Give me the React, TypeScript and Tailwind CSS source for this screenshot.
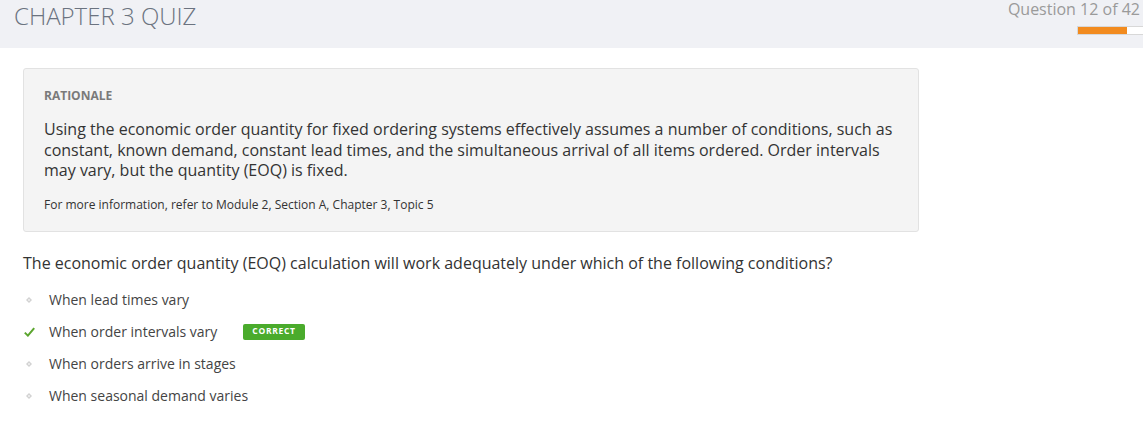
import React from "react";

const options = [
  { text: "When lead times vary", correct: false },
  { text: "When order intervals vary", correct: true },
  { text: "When orders arrive in stages", correct: false },
  { text: "When seasonal demand varies", correct: false },
];

export default function App() {
  return (
    <div className="w-[1143px] h-[427px] bg-white overflow-hidden" style={{ fontFamily: '"Open Sans", sans-serif' }}>
      <header className="h-[48px] bg-[#f0f1f5] flex justify-between">
        <h1 className="pl-[14px] pt-[1px] text-[24px] leading-[30px] font-light text-[#6b7380]">CHAPTER 3 QUIZ</h1>
        <div className="flex flex-col items-end">
          <div className="text-[16px] leading-[18px] text-[#9a9a9a] pr-[3px] whitespace-nowrap">Question 12 of 42</div>
          <div className="mt-[8px] w-[66px] h-[9px] bg-white border border-[#d8d8d8] border-r-0">
            <div className="h-full bg-[#f28b1f]" style={{ width: "49px" }} />
          </div>
        </div>
      </header>

      <main className="pl-[23px] pt-[20px] w-[919px]">
        <section className="bg-[#f4f4f4] border border-[#e2e2e2] rounded-[3px] px-[20px] pt-[19px] pb-[18px]">
          <div className="text-[12px] leading-[16px] font-bold text-[#7a7a7a]">RATIONALE</div>
          <p className="mt-[15px] text-[16px] leading-[20.5px] text-[#333333]">
            Using the economic order quantity for fixed ordering systems effectively assumes a number of conditions, such as constant, known demand, constant lead times, and the simultaneous arrival of all items ordered. Order intervals may vary, but the quantity (EOQ) is fixed.
          </p>
          <p className="mt-[16px] text-[12px] leading-[16px] text-[#333333]">
            For more information, refer to Module 2, Section A, Chapter 3, Topic 5
          </p>
        </section>

        <p className="mt-[20px] text-[16px] leading-[22px] text-[#333333]">
          The economic order quantity (EOQ) calculation will work adequately under which of the following conditions?
        </p>

        <ul className="mt-[10px]">
          {options.map((o) => (
            <li key={o.text} className="h-[32px] flex items-center">
              <span className="w-[12px] mr-[14px] flex justify-center items-center">
                {o.correct ? (
                  <svg width="11" height="10" viewBox="0 0 11 10">
                    <path d="M0.8 5.6 L3.9 8.6 L10.2 1.2" fill="none" stroke="#5ba52e" strokeWidth="2" />
                  </svg>
                ) : (
                  <svg width="6" height="6" viewBox="0 0 6 6">
                    <path d="M3 0 L6 3 L3 6 L0 3 Z" fill="#d2d2d2" />
                    <circle cx="3" cy="3" r="1" fill="#f0f0f0" />
                  </svg>
                )}
              </span>
              <span className="text-[14px] text-[#444444]">{o.text}</span>
              {o.correct && (
                <span className="ml-[26px] h-[16px] px-[9px] flex items-center bg-[#4aab2c] rounded-[2px] text-white text-[8.5px] font-bold tracking-[0.7px]">
                  CORRECT
                </span>
              )}
            </li>
          ))}
        </ul>
      </main>
    </div>
  );
}
